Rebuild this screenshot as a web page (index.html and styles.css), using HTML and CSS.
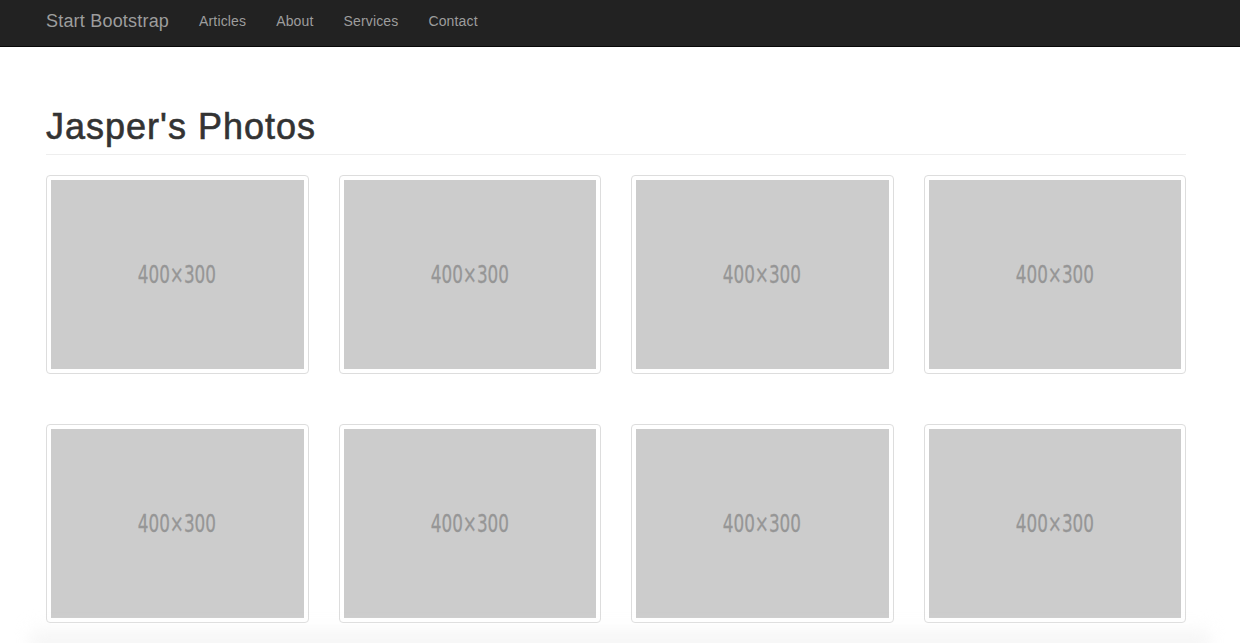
FILE: index.html
```html
<!DOCTYPE html>
<html>
<head>
<meta charset="utf-8">
<title>Jasper's Photos</title>
<link rel="stylesheet" href="styles.css">
</head>
<body>
<nav class="navbar">
  <div class="container nav-inner">
    <a class="brand" href="#">Start Bootstrap</a>
    <ul class="nav-links">
      <li><a href="#">Articles</a></li>
      <li><a href="#">About</a></li>
      <li><a href="#">Services</a></li>
      <li><a href="#">Contact</a></li>
    </ul>
  </div>
</nav>
<main class="container">
  <h1 class="page-header">Jasper's Photos</h1>
  <div class="gallery">
    <a class="thumbnail" href="#"><span class="ph"><span class="ph-text">400×300</span></span></a>
    <a class="thumbnail" href="#"><span class="ph"><span class="ph-text">400×300</span></span></a>
    <a class="thumbnail" href="#"><span class="ph"><span class="ph-text">400×300</span></span></a>
    <a class="thumbnail" href="#"><span class="ph"><span class="ph-text">400×300</span></span></a>
    <a class="thumbnail" href="#"><span class="ph"><span class="ph-text">400×300</span></span></a>
    <a class="thumbnail" href="#"><span class="ph"><span class="ph-text">400×300</span></span></a>
    <a class="thumbnail" href="#"><span class="ph"><span class="ph-text">400×300</span></span></a>
    <a class="thumbnail" href="#"><span class="ph"><span class="ph-text">400×300</span></span></a>
  </div>
</main>
<div class="bottom-shade"></div>
</body>
</html>
```
FILE: styles.css
```css
* { box-sizing: border-box; }
html, body { margin: 0; padding: 0; }
body {
  font-family: "Liberation Sans", Arial, sans-serif;
  font-size: 14px;
  color: #333;
  background: #fff;
}
.container {
  width: 1140px;
  margin-left: 46px;
}
.navbar {
  background: #222;
  border-bottom: 1px solid #080808;
  height: 47px;
}
.nav-inner {
  display: flex;
  align-items: center;
  height: 46px;
}
.brand {
  font-size: 18px;
  color: #9d9d9d;
  text-decoration: none;
  padding-right: 15px;
  line-height: 20px;
  letter-spacing: 0.2px;
  margin-top: -4px;
}
.nav-links {
  display: flex;
  list-style: none;
  margin: 0;
  padding: 0;
  margin-top: -4px;
}
.nav-links a {
  display: block;
  padding: 0 15px;
  color: #9d9d9d;
  text-decoration: none;
  line-height: 20px;
  letter-spacing: 0.15px;
}
.page-header {
  font-size: 36px;
  font-weight: normal;
  line-height: 40px;
  letter-spacing: 1px;
  -webkit-text-stroke: 0.6px #333;
  margin: 58px 0 20px;
  padding: 2px 0 7px;
  border-bottom: 1px solid #eee;
  color: #333;
}
.gallery {
  display: grid;
  grid-template-columns: repeat(4, 262.5px);
  column-gap: 30px;
  row-gap: 50px;
}
.thumbnail {
  display: block;
  padding: 4px;
  border: 1px solid #ddd;
  border-radius: 4px;
  background: #fff;
  text-decoration: none;
}
.ph {
  display: flex;
  align-items: center;
  justify-content: center;
  height: 189px;
  background: #ccc;
}
.ph-text {
  display: inline-block;
  color: #969696;
  font-family: "DejaVu Sans", sans-serif;
  font-size: 24px;
  -webkit-text-stroke: 0.3px #969696;
  transform: scaleX(0.7);
}
.bottom-shade {
  position: fixed;
  left: 30px;
  right: 30px;
  bottom: -6px;
  height: 26px;
  background: linear-gradient(to bottom, rgba(245,245,245,0), rgba(240,240,240,1));
  filter: blur(8px);
  pointer-events: none;
}
```
